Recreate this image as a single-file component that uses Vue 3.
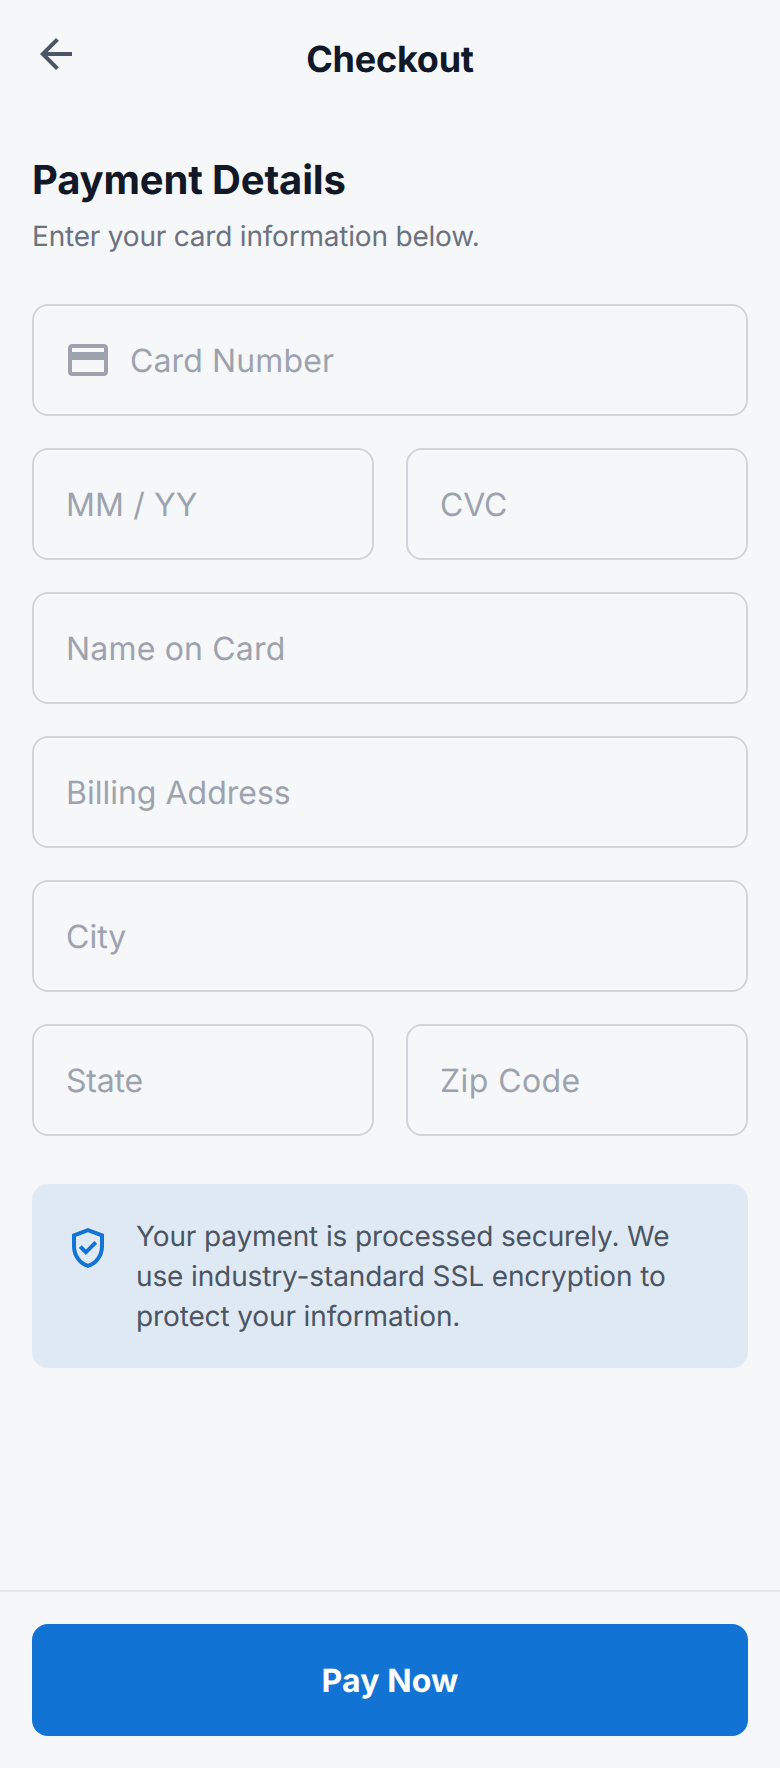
<script setup>
// `tracking` is the placeholder's letter spacing in pixels.
const rows = [
  [{ id: 'number', label: 'Card Number', icon: true, tracking: 0.12 }],
  [
    { id: 'expiry', label: 'MM / YY', tracking: 0.12 },
    { id: 'cvc', label: 'CVC', tracking: -0.2 },
  ],
  [{ id: 'name', label: 'Name on Card', tracking: 0.18 }],
  [{ id: 'address', label: 'Billing Address', tracking: 0 }],
  [{ id: 'city', label: 'City', tracking: 0 }],
  [
    { id: 'state', label: 'State', tracking: -0.22 },
    { id: 'zip', label: 'Zip Code', tracking: 0.42 },
  ],
]
</script>

<template>
  <div class="page">
    <header class="header">
      <button class="back" type="button" aria-label="Back">
        <svg class="icon" viewBox="0 -960 960 960" fill="currentColor">
          <path d="m313-440 224 224-57 56-320-320 320-320 57 56-224 224h487v80H313Z" />
        </svg>
      </button>
      <h1 class="title">Checkout</h1>
    </header>

    <main class="main">
      <h2 class="heading">Payment Details</h2>
      <p class="subtitle">Enter your card information below.</p>

      <form class="form">
        <div v-for="(row, i) in rows" :key="i" class="row">
          <label v-for="field in row" :key="field.id" class="field">
            <svg v-if="field.icon" class="icon card-icon" viewBox="0 0 24 24" fill="currentColor">
              <path d="M20 4H4c-1.11 0-1.99.89-1.99 2L2 18c0 1.11.89 2 2 2h16c1.11 0 2-.89 2-2V6c0-1.11-.89-2-2-2zm0 14H4v-6h16v6zm0-10H4V6h16v2z" />
            </svg>
            <input
              class="input"
              type="text"
              :name="field.id"
              :placeholder="field.label"
              :style="{ letterSpacing: field.tracking + 'px' }"
            />
          </label>
        </div>
      </form>

      <section class="notice">
        <svg class="icon shield" viewBox="0 -960 960 960" fill="currentColor">
          <path d="m438-338 226-226-57-57-169 169-84-84-57 57 141 141Zm42 258q-139-35-229.5-159.5T160-516v-244l320-120 320 120v244q0 152-90.5 276.5T480-80Zm0-84q104-33 172-132t68-220v-189l-240-90-240 90v189q0 121 68 220t172 132Z" />
        </svg>
        <p class="notice-text">Your payment is processed securely. We use industry-standard SSL encryption to protect your information.</p>
      </section>
    </main>

    <footer class="footer">
      <button class="pay" type="button">Pay Now</button>
    </footer>
  </div>
</template>

<style>
body {
  margin: 0;
  background: #f6f7f8;
}
</style>

<style scoped>
.page {
  box-sizing: border-box;
  display: flex;
  flex-direction: column;
  width: 780px;
  height: 1768px;
  background: #f6f7f8;
  font-family: Inter, "Liberation Sans", sans-serif;
  color: #111827;
  text-rendering: geometricPrecision;
}
h1, h2, p {
  margin: 0;
}
button {
  border: 0;
  font-family: inherit;
  text-rendering: inherit;
}
.icon {
  display: block;
  flex: none;
  width: 48px;
  height: 48px;
}
.header {
  box-sizing: border-box;
  display: flex;
  align-items: flex-start;
  height: 118px;
  padding: 30px 32px 0;
}
.back {
  padding: 0;
  background: none;
  color: #4b5563;
}
.title {
  flex: 1;
  margin-top: 7px;
  padding-right: 48px;
  text-align: center;
  font-size: 36px;
  font-weight: 700;
  line-height: 45px;
  letter-spacing: -0.22px;
}
.main {
  flex: 1;
  padding: 34px 32px 0;
}
.heading {
  font-size: 40px;
  font-weight: 700;
  line-height: 56px;
  letter-spacing: -0.17px;
}
.subtitle {
  margin-top: 8px;
  font-size: 28px;
  line-height: 40px;
  letter-spacing: -0.2px;
  color: #6b7280;
}
.form {
  display: flex;
  flex-direction: column;
  gap: 32px;
  margin-top: 48px;
}
.row {
  display: flex;
  gap: 32px;
}
.field {
  box-sizing: border-box;
  display: flex;
  flex: 1;
  align-items: center;
  gap: 18px;
  min-width: 0;
  height: 112px;
  padding: 0 32px;
  border: 2px solid #d1d5db;
  border-radius: 16px;
}
.card-icon {
  margin-left: -2px;
  color: #9ca3af;
}
.input {
  flex: 1;
  width: 100%;
  min-width: 0;
  height: 48px;
  padding: 0;
  border: 0;
  outline: 0;
  background: transparent;
  font-family: inherit;
  font-size: 32px;
  text-rendering: inherit;
  color: #111827;
}
.input::placeholder {
  color: #9ca3af;
  opacity: 1;
}
.notice {
  display: flex;
  align-items: flex-start;
  gap: 24px;
  margin-top: 48px;
  padding: 32px;
  border-radius: 16px;
  background: rgba(17, 115, 212, 0.1);
}
.shield {
  margin-top: 8px;
  color: #1173d4;
}
.notice-text {
  font-size: 28px;
  line-height: 40px;
  letter-spacing: -0.125px;
  color: #4b5563;
}
.footer {
  padding: 32px;
  border-top: 2px solid #e5e7eb;
}
.pay {
  display: block;
  width: 100%;
  height: 112px;
  border-radius: 16px;
  background: #1173d4;
  color: #fff;
  font-size: 32px;
  font-weight: 700;
  letter-spacing: 0.12px;
}
</style>
